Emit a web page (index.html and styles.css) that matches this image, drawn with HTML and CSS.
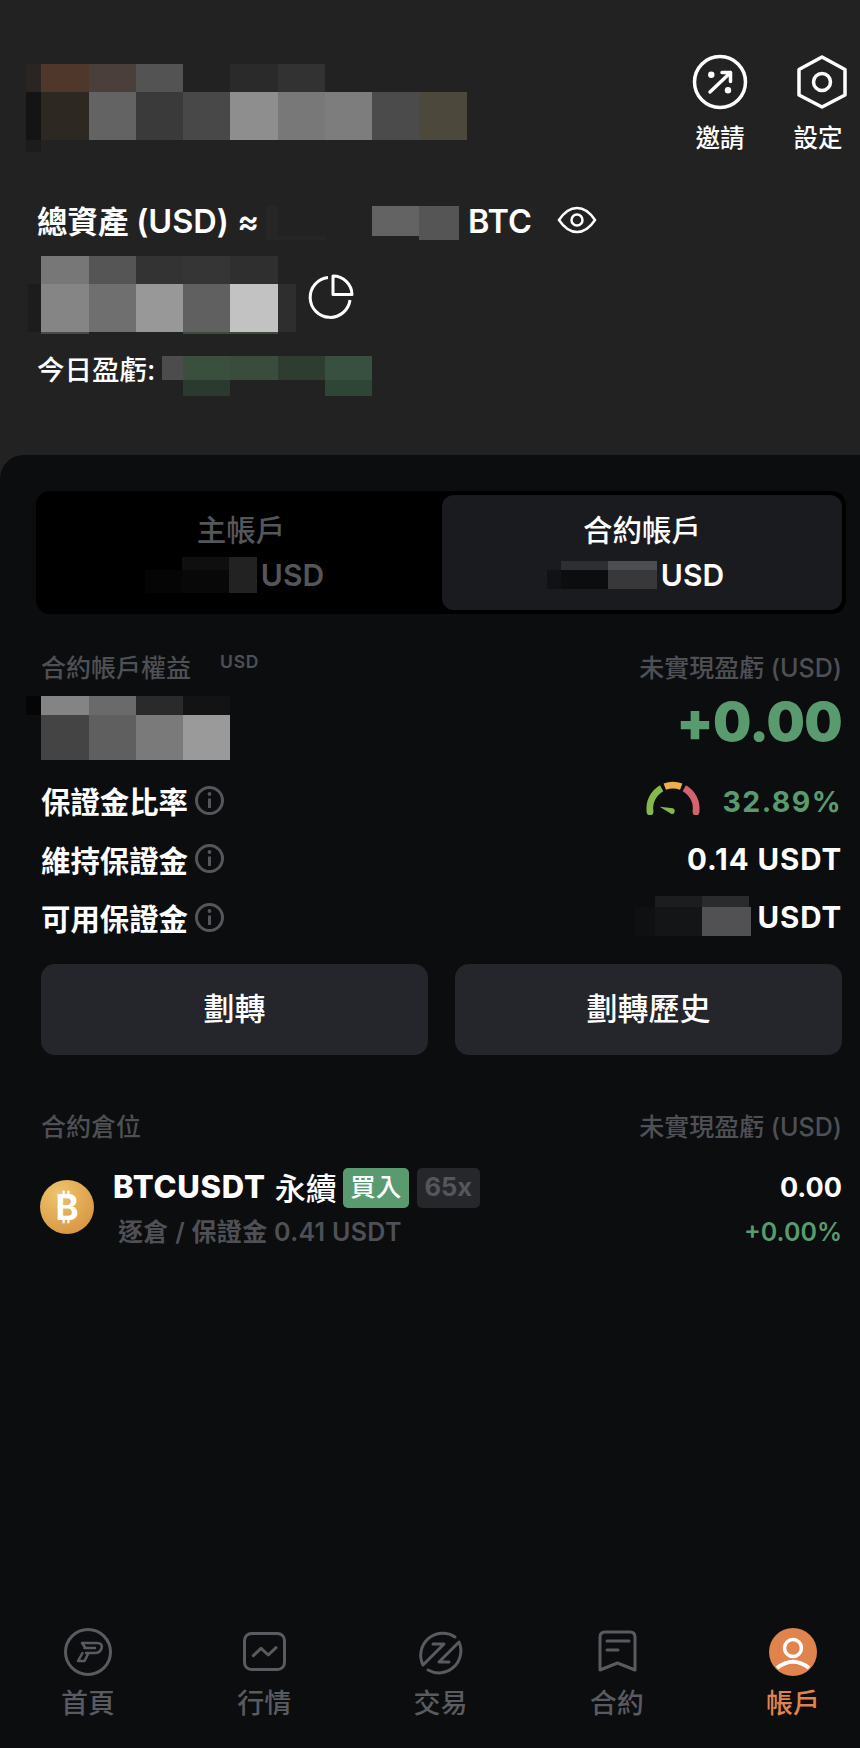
FILE: index.html
```html
<!DOCTYPE html>
<html lang="zh-Hant">
<head>
    <meta charset="UTF-8">
    <meta name="viewport" content="width=device-width, initial-scale=1.0">
    <title>帳戶</title>
    <link rel="stylesheet" href="styles.css">
</head>
<body>
    <div class="screen">
        <header class="top">
            <div class="top-bar">
                <!-- blurred account name -->
                <svg class="mosaic mosaic-name" width="441" height="88" viewBox="0 0 441 88" shape-rendering="crispEdges">
                    <rect x="0" y="0" width="15" height="28" fill="#2a2523"/>
                    <rect x="15" y="0" width="48" height="28" fill="#4f382b"/>
                    <rect x="63" y="0" width="47" height="28" fill="#4a3f3a"/>
                    <rect x="110" y="0" width="47" height="28" fill="#535353"/>
                    <rect x="204" y="0" width="48" height="28" fill="#2a2a2a"/>
                    <rect x="252" y="0" width="47" height="28" fill="#323232"/>
                    <rect x="0" y="28" width="15" height="48" fill="#141414"/>
                    <rect x="15" y="28" width="48" height="48" fill="#2e2823"/>
                    <rect x="63" y="28" width="47" height="48" fill="#636363"/>
                    <rect x="110" y="28" width="47" height="48" fill="#3a3a3a"/>
                    <rect x="157" y="28" width="47" height="48" fill="#484848"/>
                    <rect x="204" y="28" width="48" height="48" fill="#8e8e8e"/>
                    <rect x="252" y="28" width="47" height="48" fill="#787878"/>
                    <rect x="299" y="28" width="47" height="48" fill="#7d7d7d"/>
                    <rect x="346" y="28" width="47" height="48" fill="#4b4b4b"/>
                    <rect x="393" y="28" width="48" height="48" fill="#4c483b"/>
                    <rect x="0" y="76" width="15" height="12" fill="#1c1c1c"/>
                </svg>
                <div class="actions">
                    <div class="action">
                        <svg class="action-icon" width="60" height="60" viewBox="0 0 60 60" fill="none" stroke="#fff" stroke-width="3.5" stroke-linecap="round" stroke-linejoin="round">
                            <circle cx="30" cy="30" r="25.5"/>
                            <path d="M20 40 40.5 20.5M32 20.5h8.5v9"/>
                            <circle cx="21.3" cy="22.7" r="3.2" fill="#fff" stroke="none"/>
                            <circle cx="38" cy="38.3" r="3.2" fill="#fff" stroke="none"/>
                        </svg>
                        <span>邀請</span>
                    </div>
                    <div class="action">
                        <svg class="action-icon" width="60" height="60" viewBox="0 0 60 60" fill="none" stroke="#fff" stroke-width="3.5" stroke-linejoin="round">
                            <path d="M34 5 57 17.5V43L34 55 11 43V17.5Z"/>
                            <circle cx="34" cy="30" r="8.5"/>
                        </svg>
                        <span>設定</span>
                    </div>
                </div>
            </div>

            <div class="total-row">
                <span class="total-label">總資產 <span class="total-latin">(USD) ≈</span></span>
                <svg class="mosaic" width="193" height="34" viewBox="0 0 193 34" shape-rendering="crispEdges">
                    <rect x="0" y="0" width="12" height="34" fill="#262626"/>
                    <rect x="12" y="30" width="47" height="4" fill="#262626"/>
                    <rect x="106" y="0" width="47" height="30" fill="#636363"/>
                    <rect x="153" y="0" width="40" height="34" fill="#555"/>
                </svg>
                <span class="total-label total-unit"><span class="total-latin">BTC</span></span>
                <svg class="eye" width="40" height="30" viewBox="0 0 40 30" fill="none" stroke="#fff" stroke-width="2.5">
                    <path d="M2 15C8 6 14 3 20 3S32 6 38 15C32 24 26 27 20 27S8 24 2 15Z"/>
                    <circle cx="20" cy="15" r="5.5"/>
                </svg>
            </div>

            <div class="balance-row">
                <svg class="mosaic" width="268" height="78" viewBox="0 0 268 78" shape-rendering="crispEdges">
                    <rect x="13" y="0" width="48" height="28" fill="#777"/>
                    <rect x="61" y="0" width="47" height="28" fill="#555"/>
                    <rect x="108" y="0" width="47" height="28" fill="#333"/>
                    <rect x="155" y="0" width="47" height="28" fill="#353535"/>
                    <rect x="202" y="0" width="48" height="28" fill="#2f2f2f"/>
                    <rect x="0" y="28" width="13" height="48" fill="#1c1c1c"/>
                    <rect x="13" y="28" width="48" height="48" fill="#858585"/>
                    <rect x="61" y="28" width="47" height="48" fill="#6f6f6f"/>
                    <rect x="108" y="28" width="47" height="48" fill="#989898"/>
                    <rect x="155" y="28" width="47" height="48" fill="#606060"/>
                    <rect x="202" y="28" width="48" height="48" fill="#c2c2c2"/>
                    <rect x="250" y="28" width="18" height="48" fill="#2e2e2e"/>
                    <rect x="13" y="76" width="48" height="2" fill="#4a4a4a"/>
                    <rect x="155" y="76" width="95" height="2" fill="#3a4c3e"/>
                </svg>
                <svg class="pie" width="46" height="46" viewBox="0 0 46 46" fill="none" stroke="#fff" stroke-width="3" stroke-linejoin="round">
                    <path d="M20 3.5A20 20 0 1 0 42 26"/>
                    <path d="M25 2V20.5H44A19 19 0 0 0 25 2Z"/>
                </svg>
            </div>

            <div class="today-row">
                <span class="today-label">今日盈虧:</span>
                <svg class="mosaic" width="210" height="40" viewBox="0 0 210 40" shape-rendering="crispEdges">
                    <rect x="0" y="0" width="21" height="24" fill="#4c4c4c"/>
                    <rect x="21" y="0" width="47" height="24" fill="#3a4f3e"/>
                    <rect x="68" y="0" width="48" height="24" fill="#3a4c3c"/>
                    <rect x="116" y="0" width="47" height="24" fill="#2e3d30"/>
                    <rect x="163" y="0" width="47" height="24" fill="#375040"/>
                    <rect x="21" y="24" width="47" height="16" fill="#2b3a2e"/>
                    <rect x="163" y="24" width="47" height="16" fill="#2f4535"/>
                </svg>
            </div>
        </header>

        <main class="panel">
            <div class="tabs">
                <div class="tab">
                    <div class="tab-title">主帳戶</div>
                    <div class="tab-value">
                        <svg class="mosaic" width="112" height="36" viewBox="0 0 112 36" shape-rendering="crispEdges">
                            <rect x="0" y="13" width="37" height="23" fill="#050505"/>
                            <rect x="37" y="0" width="47" height="13" fill="#0f0f0f"/>
                            <rect x="37" y="13" width="47" height="23" fill="#080808"/>
                            <rect x="84" y="0" width="28" height="36" fill="#222"/>
                        </svg>
                        <span>USD</span>
                    </div>
                </div>
                <div class="tab tab-active">
                    <div class="tab-title">合約帳戶</div>
                    <div class="tab-value">
                        <svg class="mosaic" width="110" height="28" viewBox="0 0 110 28" shape-rendering="crispEdges">
                            <rect x="14" y="0" width="47" height="9" fill="#2e2f33"/>
                            <rect x="61" y="0" width="49" height="9" fill="#4c4d50"/>
                            <rect x="0" y="9" width="14" height="19" fill="#111215"/>
                            <rect x="14" y="9" width="47" height="19" fill="#0c0d0f"/>
                            <rect x="61" y="9" width="49" height="19" fill="#38383b"/>
                        </svg>
                        <span>USD</span>
                    </div>
                </div>
            </div>

            <div class="content">
                <div class="equity-head">
                    <div class="equity-title">
                        <span class="muted">合約帳戶權益</span>
                        <span class="equity-unit">USD</span>
                    </div>
                    <span class="muted">未實現盈虧 (USD)</span>
                </div>
                <div class="equity-values">
                    <svg class="mosaic mosaic-equity" width="204" height="64" viewBox="0 0 204 64" shape-rendering="crispEdges">
                        <rect x="0" y="0" width="15" height="19" fill="#050505"/>
                        <rect x="15" y="0" width="48" height="19" fill="#848484"/>
                        <rect x="63" y="0" width="47" height="19" fill="#6a6a6a"/>
                        <rect x="110" y="0" width="47" height="19" fill="#2a2a2a"/>
                        <rect x="157" y="0" width="47" height="19" fill="#131313"/>
                        <rect x="15" y="19" width="48" height="45" fill="#444"/>
                        <rect x="63" y="19" width="47" height="45" fill="#5f5f5f"/>
                        <rect x="110" y="19" width="47" height="45" fill="#7a7a7a"/>
                        <rect x="157" y="19" width="47" height="45" fill="#9a9a9a"/>
                    </svg>
                    <span class="pnl">+0.00</span>
                </div>

                <div class="stats">
                    <div class="stat-row">
                        <div class="stat-label">保證金比率
                            <svg class="info" width="29" height="29" viewBox="0 0 29 29" fill="none" stroke="#55565b" stroke-width="3"><circle cx="14.5" cy="14.5" r="13"/><path d="M14.5 12.5V22"/><circle cx="14.5" cy="8" r="1.9" fill="#55565b" stroke="none"/></svg>
                        </div>
                        <div class="stat-value">
                            <svg class="gauge" width="56" height="34" viewBox="0 0 56 34" fill="none" stroke-width="6.5">
                                <path d="M5.7 31A22.5 22.5 0 0 1 17 8" stroke="#87b84d"/>
                                <circle cx="5.7" cy="31" r="3.25" fill="#87b84d"/>
                                <path d="M20 6.5A22.5 22.5 0 0 1 36 6.5" stroke="#eeae4c"/>
                                <path d="M39 8A22.5 22.5 0 0 1 50.3 31" stroke="#d4636f"/>
                                <circle cx="50.3" cy="31" r="3.25" fill="#d4636f"/>
                                <path d="M15 26 28 27.5A3 3 0 0 1 27 33.2Z" fill="#87b84d"/>
                            </svg>
                            <span class="ratio">32.89%</span>
                        </div>
                    </div>
                    <div class="stat-row">
                        <div class="stat-label">維持保證金
                            <svg class="info" width="29" height="29" viewBox="0 0 29 29" fill="none" stroke="#55565b" stroke-width="3"><circle cx="14.5" cy="14.5" r="13"/><path d="M14.5 12.5V22"/><circle cx="14.5" cy="8" r="1.9" fill="#55565b" stroke="none"/></svg>
                        </div>
                        <div class="stat-value">0.14 USDT</div>
                    </div>
                    <div class="stat-row">
                        <div class="stat-label">可用保證金
                            <svg class="info" width="29" height="29" viewBox="0 0 29 29" fill="none" stroke="#55565b" stroke-width="3"><circle cx="14.5" cy="14.5" r="13"/><path d="M14.5 12.5V22"/><circle cx="14.5" cy="8" r="1.9" fill="#55565b" stroke="none"/></svg>
                        </div>
                        <div class="stat-value">
                            <svg class="mosaic" width="116" height="40" viewBox="0 0 116 40" shape-rendering="crispEdges">
                                <rect x="20" y="0" width="47" height="11" fill="#1c1d1f"/>
                                <rect x="67" y="0" width="47" height="11" fill="#2a2b2d"/>
                                <rect x="0" y="11" width="20" height="29" fill="#0f1012"/>
                                <rect x="20" y="11" width="47" height="29" fill="#141517"/>
                                <rect x="67" y="11" width="49" height="29" fill="#515153"/>
                            </svg>
                            <span>USDT</span>
                        </div>
                    </div>
                </div>

                <div class="buttons">
                    <div class="btn">劃轉</div>
                    <div class="btn">劃轉歷史</div>
                </div>

                <div class="positions-head">
                    <span class="muted">合約倉位</span>
                    <span class="muted">未實現盈虧 (USD)</span>
                </div>
                <div class="position">
                    <div class="coin">₿</div>
                    <div class="position-info">
                        <div class="position-title">
                            <span class="symbol">BTCUSDT</span>
                            <span class="symbol-kind">永續</span>
                            <span class="tag tag-buy">買入</span>
                            <span class="tag tag-lev">65x</span>
                        </div>
                        <div class="position-sub">逐倉 / 保證金 0.41 USDT</div>
                    </div>
                    <div class="position-pnl">
                        <div class="position-amount">0.00</div>
                        <div class="position-rate">+0.00%</div>
                    </div>
                </div>
            </div>

            <nav class="nav">
                <div class="nav-item">
                    <svg width="48" height="48" viewBox="0 0 48 48" fill="none" stroke="currentColor" stroke-width="3" stroke-linejoin="round" stroke-linecap="round">
                        <circle cx="24" cy="24" r="22.5"/>
                        <path d="M18 15H33Q39 15 37.5 20.5 36 25 31 25H22M20.5 20H31M18 15 21.5 20M18.5 25 14 33H20.5L24.5 25" stroke-width="2.5"/>
                    </svg>
                    <span>首頁</span>
                </div>
                <div class="nav-item">
                    <svg width="48" height="48" viewBox="0 0 48 48" fill="none" stroke="currentColor" stroke-width="3" stroke-linejoin="round" stroke-linecap="round">
                        <rect x="4.5" y="5.5" width="40" height="36" rx="7"/>
                        <path d="M13.3 27.7 21 20.3 28.3 27 36 19.7"/>
                    </svg>
                    <span>行情</span>
                </div>
                <div class="nav-item">
                    <svg width="48" height="48" viewBox="0 0 48 48" fill="none" stroke="currentColor" stroke-width="3" stroke-linejoin="round" stroke-linecap="round">
                        <path d="M38 9A22 22 0 0 0 6 37L27 16H16"/>
                        <path d="M11 42A22 22 0 0 0 42 14L22 34H32"/>
                    </svg>
                    <span>交易</span>
                </div>
                <div class="nav-item">
                    <svg width="48" height="48" viewBox="0 0 48 48" fill="none" stroke="currentColor" stroke-width="3" stroke-linejoin="round" stroke-linecap="round">
                        <path d="M7 42V9Q7 4 12 4H37Q42 4 42 9V42L24.5 35Z"/>
                        <path d="M14 13H36M14 22H25"/>
                    </svg>
                    <span>合約</span>
                </div>
                <div class="nav-item nav-active">
                    <svg width="48" height="48" viewBox="0 0 48 48" fill="none">
                        <circle cx="24" cy="24" r="24" fill="#e0834d"/>
                        <circle cx="24" cy="20" r="8.5" stroke="#fff" stroke-width="3.5"/>
                        <path d="M8 40Q24 27.5 40 40" stroke="#fff" stroke-width="4"/>
                    </svg>
                    <span>帳戶</span>
                </div>
            </nav>
        </main>
    </div>
</body>
</html>
```
FILE: styles.css
```css
* {
    box-sizing: border-box;
}
body {
    margin: 0;
    padding: 0;
    background-color: #222222;
    color: #FFFFFF;
    font-family: Inter, "Noto Sans CJK TC", sans-serif;
}
.screen {
    width: 860px;
    height: 1748px;
    display: flex;
    flex-direction: column;
    overflow: hidden;
}
.mosaic {
    display: block;
    flex-shrink: 0;
}

/* top part */
.top {
    height: 455px;
    padding-top: 52px;
    flex-shrink: 0;
}
.top-bar {
    display: flex;
    justify-content: space-between;
    align-items: flex-start;
    padding: 0 12px 0 26px;
}
.mosaic-name {
    margin-top: 12px;
}
.actions {
    display: flex;
    gap: 38px;
}
.action {
    width: 60px;
    display: flex;
    flex-direction: column;
    align-items: center;
    gap: 9px;
    font-size: 24.5px;
    line-height: 34px;
    font-weight: 500;
}
.action-icon {
    display: block;
}
.total-row {
    display: flex;
    align-items: center;
    height: 34px;
    margin-top: 51px;
    padding-left: 37px;
}
.total-label {
    margin: 0 7px 2px 0;
    font-size: 30.5px;
    line-height: 34px;
    font-weight: 600;
    white-space: nowrap;
}
.total-latin {
    font-size: 32.5px;
}
.total-unit {
    margin: 0 25px 2px 9px;
}
.eye {
    margin-bottom: 6px;
}
.balance-row {
    display: flex;
    align-items: center;
    gap: 12px;
    margin-top: 16px;
    padding-left: 28px;
}
.pie {
    display: block;
    margin-top: 4px;
}
.today-row {
    display: flex;
    align-items: flex-start;
    margin-top: 22px;
    padding-left: 37px;
    height: 40px;
}
.today-label {
    width: 125px;
    font-size: 27.5px;
    line-height: 28px;
    font-weight: 500;
}

/* dark panel */
.panel {
    flex-grow: 1;
    display: flex;
    flex-direction: column;
    padding: 36px 14px 0 36px;
    background-color: #0c0d0f;
    border-top-left-radius: 24px;
}
.tabs {
    display: grid;
    grid-template-columns: 402px 1fr;
    height: 123px;
    padding: 4px;
    background-color: #000000;
    border-radius: 14px;
}
.tab {
    padding-top: 15px;
    border-radius: 12px;
    color: #55565b;
    text-align: center;
}
.tab-active {
    background-color: #191b1f;
    color: #FFFFFF;
}
.tab-title {
    font-size: 29.5px;
    line-height: 40px;
    font-weight: 500;
}
.tab-value {
    display: flex;
    justify-content: center;
    align-items: center;
    gap: 4px;
    height: 40px;
    margin-top: 5px;
    padding-right: 13px;
    font-size: 30px;
    font-weight: 600;
}
.content {
    padding: 0 4px 0 5px;
}
.muted {
    color: #4f5055;
    font-size: 25px;
    line-height: 40px;
    font-weight: 500;
}
.equity-head {
    display: flex;
    justify-content: space-between;
    height: 40px;
    margin-top: 34px;
}
.equity-title {
    display: flex;
}
.equity-unit {
    margin: 5px 0 0 29px;
    color: #4f5055;
    font-size: 17.5px;
    line-height: 18px;
    font-weight: 600;
    letter-spacing: 0.8px;
}
.equity-values {
    display: flex;
    justify-content: space-between;
    align-items: center;
    height: 64px;
    margin-top: 8px;
}
.mosaic-equity {
    margin-left: -15px;
}
.pnl {
    margin-bottom: 12px;
    color: #599b6f;
    font-size: 54px;
    line-height: 52px;
    font-weight: 900;
    letter-spacing: -0.7px;
}
.stats {
    margin-top: 11px;
}
.stat-row {
    display: flex;
    justify-content: space-between;
    align-items: center;
    height: 58.5px;
}
.stat-label {
    display: flex;
    align-items: center;
    gap: 7px;
    font-size: 29.4px;
    font-weight: 600;
}
.info {
    display: block;
}
.stat-value {
    display: flex;
    align-items: center;
    gap: 6px;
    font-size: 29.5px;
    font-weight: 700;
    letter-spacing: 0.9px;
}
.stat-value .mosaic {
    margin-bottom: 2px;
}
.gauge {
    display: block;
    width: 58px;
    height: 35px;
    margin: 0 15px 6px 0;
}
.ratio {
    margin-top: 2px;
    color: #599b6f;
    font-size: 28.5px;
    letter-spacing: 1.4px;
}
.buttons {
    display: grid;
    grid-template-columns: 1fr 1fr;
    gap: 27px;
    margin-top: 17px;
}
.btn {
    height: 91px;
    line-height: 90px;
    border-radius: 14px;
    background-color: #24262b;
    text-align: center;
    font-size: 31px;
    font-weight: 500;
}
.positions-head {
    display: flex;
    justify-content: space-between;
    height: 40px;
    margin-top: 52px;
}
.position {
    display: flex;
    margin-top: 21px;
}
.coin {
    width: 54px;
    height: 54px;
    margin: 12px 19px 0 -1px;
    border-radius: 50%;
    background: radial-gradient(circle at 35% 25%, #eec46e, #d48c37);
    text-align: center;
    font-size: 35px;
    line-height: 54px;
    font-weight: 700;
}
.position-info {
    flex-grow: 1;
}
.position-title {
    display: flex;
    align-items: center;
    height: 40px;
}
.symbol {
    margin-bottom: 3px;
    font-size: 31px;
    font-weight: 800;
    letter-spacing: 0.8px;
}
.symbol-kind {
    margin: 0 6px 3px 9px;
    font-size: 31px;
    font-weight: 500;
}
.tag {
    height: 40px;
    line-height: 38px;
    border-radius: 5px;
    text-align: center;
    font-size: 25.5px;
}
.tag-buy {
    width: 66px;
    background-color: #599b6f;
    font-weight: 500;
}
.tag-lev {
    width: 63px;
    margin-left: 8px;
    background-color: #25272b;
    color: #55565b;
    font-weight: 700;
}
.position-sub {
    margin-top: 4px;
    padding-left: 5px;
    color: #4f5055;
    font-size: 25px;
    line-height: 40px;
    font-weight: 600;
    letter-spacing: 0.3px;
}
.position-pnl {
    text-align: right;
}
.position-amount {
    font-size: 27px;
    line-height: 40px;
    font-weight: 700;
}
.position-rate {
    margin-top: 4px;
    color: #599b6f;
    font-size: 25px;
    line-height: 40px;
    font-weight: 600;
}

/* bottom nav */
.nav {
    display: flex;
    justify-content: space-between;
    margin: auto 6px 0 5px;
    padding-bottom: 26px;
}
.nav-item {
    width: 94px;
    display: flex;
    flex-direction: column;
    align-items: center;
    gap: 10px;
    color: #5a5b60;
    font-size: 27px;
    line-height: 36px;
    font-weight: 500;
}
.nav-item svg {
    display: block;
}
.nav-active {
    color: #e0834d;
}
```
